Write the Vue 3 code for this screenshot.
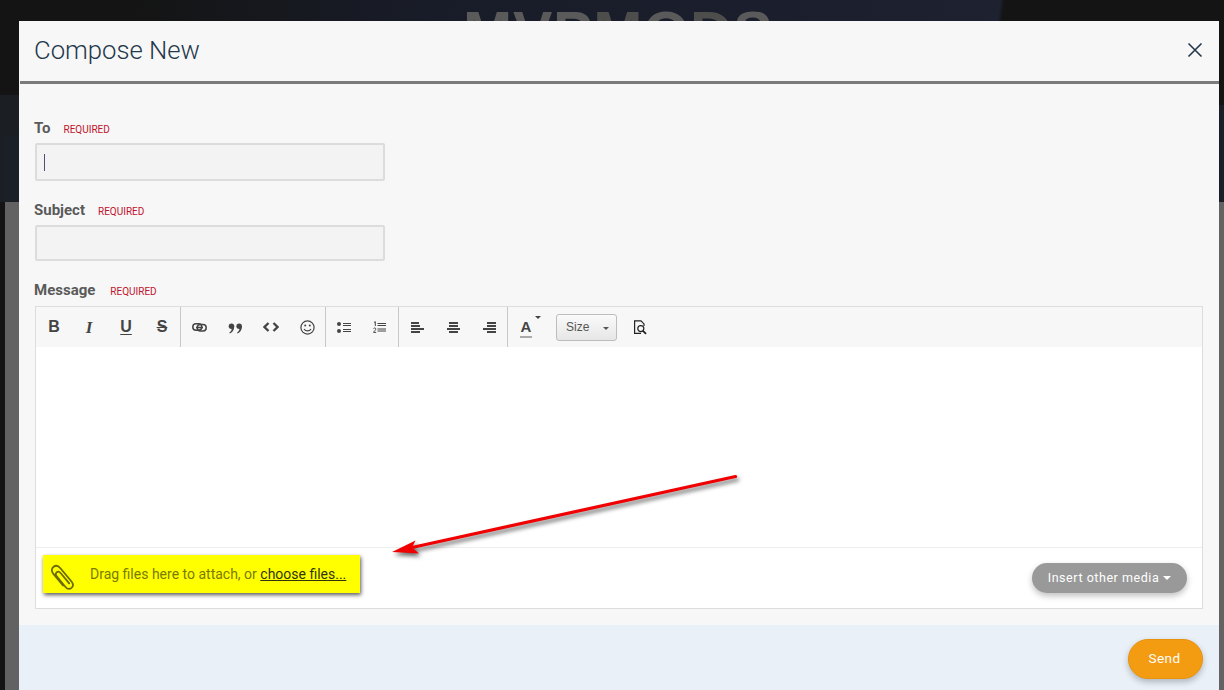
<script setup>
const group1 = ['B', 'I', 'U', 'S']
</script>

<template>
  <div class="page">
    <div class="backdrop">
      <div class="hero">
        <span class="logo">MVP<span class="dim">M</span>O<span class="dim">D</span>S</span>
      </div>
      <div class="strip-mid"></div>
      <div class="strip-mid-inner"></div>
      <div class="strip-low"></div>
      <div class="strip-right-top"></div>
      <div class="strip-right-low"></div>
    </div>

    <div class="modal">
      <header class="head">
        <h2 class="title">Compose New</h2>
        <svg class="close" width="16" height="16" viewBox="0 0 16 16">
          <path d="M1.500 1.500 14.500 14.500M14.500 1.500 1.500 14.500" stroke="#24384c" stroke-width="1.600" fill="none" />
        </svg>
      </header>

      <form class="form" @submit.prevent>
        <div class="label-row"><span class="label">To</span><span class="req">REQUIRED</span></div>
        <div class="input to"><span class="caret"></span></div>

        <div class="label-row gap"><span class="label">Subject</span><span class="req">REQUIRED</span></div>
        <div class="input subject"></div>

        <div class="label-row gap last"><span class="label">Message</span><span class="req">REQUIRED</span></div>

        <div class="editor">
          <div class="toolbar">
            <div class="group">
              <span v-for="g in group1" :key="g" class="tool glyph" :class="'g-' + g">{{ g }}</span>
            </div>
            <div class="group">
              <span class="tool">
                <svg width="15" height="9" viewBox="0 0 15 9" fill="none" stroke="#444" stroke-width="1.500">
                  <rect x=".8" y=".8" width="9" height="6.400" rx="3.200" />
                  <rect x="5.200" y="1.600" width="9" height="6.400" rx="3.200" />
                  <path d="M4 4.500h7" />
                </svg>
              </span>
              <span class="tool">
                <svg width="15" height="11" viewBox="0 0 16 12" fill="#444" class="quote">
                  <circle cx="3.600" cy="3.600" r="3" /><path d="M6.600 3.600C6.600 8 4.500 10.500 1.800 11.500L1.300 10.400C3 9.500 3.900 8 3.900 6.400Z" />
                  <circle cx="12" cy="3.600" r="3" /><path d="M15 3.600C15 8 12.900 10.500 10.200 11.500L9.700 10.400C11.400 9.500 12.300 8 12.300 6.400Z" />
                </svg>
              </span>
              <span class="tool">
                <svg width="16" height="10" viewBox="0 0 16 10" fill="none" stroke="#444" stroke-width="2.300">
                  <path d="M5.500 1 1.500 5l4 4M10.500 1l4 4-4 4" />
                </svg>
              </span>
              <span class="tool">
                <svg width="15" height="15" viewBox="0 0 15 15" fill="none" stroke="#444" stroke-width="1.200">
                  <circle cx="7.500" cy="7.500" r="6.600" />
                  <path d="M4 9c1.800 2.600 5.200 2.600 7 0" />
                  <circle cx="5.200" cy="5.500" r="1" fill="#444" stroke="none" />
                  <circle cx="9.800" cy="5.500" r="1" fill="#444" stroke="none" />
                </svg>
              </span>
            </div>
            <div class="group">
              <span class="tool">
                <svg width="14" height="11" viewBox="0 0 14 11" fill="#444">
                  <circle cx="2" cy="2" r="2" /><circle cx="2" cy="9" r="2" />
                  <rect x="6" y="1" width="8" height="1" /><rect x="6" y="3" width="8" height="1" />
                  <rect x="6" y="7" width="8" height="1" /><rect x="6" y="9" width="8" height="1" />
                </svg>
              </span>
              <span class="tool ol">
                <svg width="13" height="12" viewBox="0 0 13 12" fill="none" stroke="#444" stroke-width="1">
                  <path d="M1 1.500 2.300.7V5M4.500 2.500H13M4.500 4.500H13M4.500 8H13M4.500 10H13M.5 7.500c1-1 2.500-.5 2.300.7C2.600 9.300 1 10 .6 11.400h2.600" />
                </svg>
              </span>
            </div>
            <div class="group">
              <span class="tool"><span class="align left"><i></i><i></i><i></i><i></i></span></span>
              <span class="tool"><span class="align center"><i></i><i></i><i></i><i></i></span></span>
              <span class="tool"><span class="align right"><i></i><i></i><i></i><i></i></span></span>
            </div>
            <span class="tool color">
              <span class="color-a">A</span>
              <span class="mini-caret"></span>
            </span>
            <span class="size">Size<span class="size-caret"></span></span>
            <span class="tool preview">
              <svg width="14" height="15" viewBox="0 0 14 15" fill="none" stroke="#222" stroke-width="1.200">
                <path d="M8 13.400H1.600V.9H8l3 3v2" />
                <circle cx="7.800" cy="8.600" r="3" />
                <path d="M10 10.800l3 3" stroke-width="1.800" />
              </svg>
            </span>
          </div>

          <div class="writing"></div>

          <div class="attach-row">
            <div class="dropzone">
              <svg class="clip" width="25" height="26" viewBox="0 0 25 26" fill="none" stroke="#6b6b00" stroke-width="1.800" stroke-linecap="round">
                <path d="M13 21.500 3.400 9.900C.9 6.900 1.700 4.300 3.600 2.800 5.600 1.200 8.100 1.400 10.400 4.200L21.500 17.500C23.600 20.100 23.400 22.300 21.500 23.900 19.500 25.500 17.200 25 15.300 22.700L6.700 12.300C5.500 10.800 5.600 9.300 6.800 8.300 8 7.300 9.400 7.600 10.600 9L19.200 19.400" />
              </svg>
              <span class="drop-text">Drag files here to attach, or <a class="choose">choose files...</a></span>
            </div>
            <button type="button" class="media">Insert other media<span class="media-caret"></span></button>
          </div>
        </div>
      </form>

      <footer class="foot">
        <button type="button" class="send">Send</button>
      </footer>
    </div>

    <svg class="arrow" width="1224" height="690" viewBox="0 0 1224 690">
      <path d="M735.500 476.500 412 547.500" stroke="#f00000" stroke-width="3.200" stroke-linecap="round" fill="none" />
      <path d="M392 552 415.500 540.500 412 547.500 419 553.500Z" fill="#f00000" />
    </svg>
  </div>
</template>

<style>
html, body { margin: 0; background: #141414; }
</style>

<style scoped>
.page {
  position: relative;
  width: 1224px;
  height: 690px;
  overflow: hidden;
  padding-top: 21px;
  box-sizing: border-box;
  font-family: Roboto, "Liberation Sans", sans-serif;
}
.backdrop { position: absolute; inset: 0; background: #141414; overflow: hidden; }
.hero {
  position: absolute; left: 0; top: 0; width: 1224px; height: 95px;
  background: linear-gradient(97deg, #141414 0, #141414 130px, #181c28 420px, #1d2130 993px, #141414 997px);
}
.logo {
  position: absolute; left: 463px; top: 0; font: 700 59px/1 "Liberation Sans", sans-serif;
  letter-spacing: .8px;
  color: #5a5a5a; white-space: nowrap; padding-top: 4px;
}
.dim { color: #4d4d4b; }
.strip-mid { position: absolute; left: 0; top: 95px; width: 19px; height: 107px; background: #1b1e22; }
.strip-mid-inner { position: absolute; left: 5px; top: 135px; width: 14px; height: 67px; background: #1a2028; }
.strip-low { position: absolute; left: 5px; top: 202px; width: 14px; height: 488px; background: #626262; }
.strip-right-top { position: absolute; left: 1219px; top: 105px; width: 5px; height: 97px; background: #1a1f27; }
.strip-right-low { position: absolute; left: 1219px; top: 202px; width: 5px; height: 488px; background: #626262; }

.modal {
  position: relative;
  margin-left: 19px;
  width: 1200px;
  height: 669px;
  box-sizing: border-box;
  background: #f7f7f7;
  display: flex;
  flex-direction: column;
}
.head {
  height: 63px;
  box-sizing: border-box;
  margin-left: 1px;
  border-bottom: 3px solid #7b7b7b;
  display: flex;
  align-items: center;
  justify-content: space-between;
  padding: 0 16px 0 14px;
}
.title { margin: 0; font-size: 25.700px; font-weight: 300; color: #24384c; line-height: 1; }
.close { display: block; margin-bottom: 2px; }

.form { padding: 34px 16px 16px 15px; }
.label-row { display: flex; align-items: center; height: 20px; margin-bottom: 5px; }
.label-row.gap { margin-top: 19px; }
.label-row.last { margin-bottom: 6px; }
.label { font-size: 15px; font-weight: 700; color: #5a5a5a; margin-right: 13px; }
.last .label { margin-right: 15px; }
.req { font-size: 10px; color: #c0132c; margin-top: 2px; }
.input {
  width: 350px;
  box-sizing: border-box;
  margin-left: 1px;
  background: #f3f3f3;
  border: 2px solid #dcdcdc;
  border-radius: 2px;
  display: flex;
  align-items: center;
  padding-left: 7px;
}
.input.to { height: 38px; }
.input.subject { height: 36px; }
.caret { width: 1px; height: 17px; background: #4f4f7a; }

.editor {
  margin-left: 1px;
  width: 1168px;
  height: 303px;
  box-sizing: border-box;
  border: 1px solid #dddddd;
  display: flex;
  flex-direction: column;
  background: #fff;
}
.toolbar { height: 40px; background: #f7f7f7; display: flex; align-items: stretch; flex: none; }
.group { display: flex; border-right: 1px solid #c8c8c8; }
.tool { width: 36px; display: flex; align-items: center; justify-content: center; position: relative; }
.glyph { font: 700 16px/1 "Liberation Sans", sans-serif; color: #444; }
.g-I { font-family: "Liberation Serif", serif; font-style: italic; font-size: 17px; padding-right: 2px; box-sizing: border-box; }
.g-U { text-decoration: underline; text-underline-offset: 2px; }
.g-S { text-decoration: line-through; }
.quote { margin-top: 2px; }
.ol { padding-right: 1px; box-sizing: border-box; }

.align { display: flex; flex-direction: column; gap: 1px; width: 13px; }
.align i { height: 2px; background: #444; display: block; }
.align i:nth-child(odd) { width: 13px; }
.align i:nth-child(even) { width: 9px; }
.align.center { align-items: center; }
.align.right { align-items: flex-end; }
.align.left i:nth-child(1) { width: 8px; }
.align.center i:nth-child(1), .align.right i:nth-child(1) { width: 9px; }

.color-a { font: 700 15px/1 "Liberation Sans", sans-serif; color: #444; border-bottom: 2px solid #aaa; padding: 0 1px 2px; margin-top: 2px; }
.mini-caret {
  position: absolute; left: 27px; top: 9px; width: 0; height: 0;
  border-left: 3px solid transparent; border-right: 3px solid transparent; border-top: 3px solid #444;
}
.size {
  align-self: center;
  margin-left: 12px;
  width: 61px;
  height: 27px;
  box-sizing: border-box;
  border: 1px solid #bdbdbd;
  border-radius: 3px;
  background: linear-gradient(#fafafa, #e6e6e6);
  display: flex;
  align-items: center;
  padding-left: 9px;
  font: 12px "Liberation Sans", sans-serif;
  color: #555;
  position: relative;
}
.size-caret {
  position: absolute; right: 7px; top: 12px; width: 0; height: 0;
  border-left: 3px solid transparent; border-right: 3px solid transparent; border-top: 3px solid #555;
}
.preview { margin-left: 5px; }

.writing { height: 200px; flex: none; border-bottom: 1px solid #eeeeee; }
.attach-row { display: flex; justify-content: space-between; align-items: flex-start; padding: 7px 15px 0 7px; }
.dropzone {
  width: 317px;
  height: 38px;
  box-sizing: border-box;
  background: #ffff00;
  box-shadow: 1px 2px 4px rgba(0, 0, 0, .65);
  display: flex;
  align-items: center;
  padding-left: 7px;
}
.clip { flex: none; display: block; margin-top: 6px; }
.drop-text { margin-left: 15px; font-size: 14px; color: #7a7a00; white-space: nowrap; }
.choose { color: #33330a; text-decoration: underline; }
.media {
  margin-top: 8px;
  width: 155px;
  height: 30px;
  border: 0;
  border-radius: 15px;
  background: #999;
  color: #fff;
  font: 12.500px Roboto, sans-serif;
  letter-spacing: .55px;
  box-shadow: 0 3px 6px rgba(0, 0, 0, .25);
  padding: 0 0 2px;
}
.media-caret {
  display: inline-block; margin-left: 4px; vertical-align: 2px; width: 0; height: 0;
  border-left: 4px solid transparent; border-right: 4px solid transparent; border-top: 4px solid #fff;
}

.foot { flex: 1; background: #e9f0f8; display: flex; justify-content: flex-end; padding: 14px 16px 0 0; }
.send {
  width: 75px;
  height: 40px;
  border: 1px solid #e8930f;
  border-radius: 20px;
  background: #f39c12;
  color: #fff;
  font: 400 13.500px Roboto, sans-serif;
  letter-spacing: .5px;
  box-shadow: 0 3px 6px rgba(0, 0, 0, .25);
  padding: 0 2px 2px 0;
}
.arrow { position: absolute; left: 0; top: 0; pointer-events: none; filter: drop-shadow(2px 3px 2px rgba(0, 0, 0, .6)); }
</style>
